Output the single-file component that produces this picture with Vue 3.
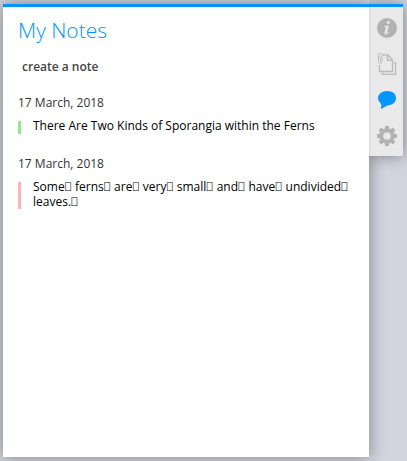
<template>
    <div class="page">
        <div class="panel">
            <div class="notes">
                <h1>My Notes</h1>
                <a class="create">create a note</a>
                <div v-for="(note, index) in notes" :key="index" class="note">
                    <div class="date">{{ note.date }}</div>
                    <div class="text" :class="note.color">
                        <template v-for="(part, i) in note.text.split('⎕')" :key="i"><span v-if="i > 0" class="box">⎕</span>{{ part }}</template>
                    </div>
                </div>
            </div>
        </div>
        <div class="tabs">
            <svg class="icon" viewBox="0 0 20 20">
                <circle cx="10" cy="10" r="10" />
                <circle class="light" cx="11.4" cy="4.5" r="1.5" />
                <path class="light" d="M7.2 8.1 11.9 7.5 10.1 14.2Q9.9 15.2 10.6 14.8L12 13.5 12.5 14Q10.7 16.4 8.8 16.4 7.1 16.3 7.6 14.3L8.9 9.4Q9 8.7 7.1 8.7Z" />
            </svg>
            <svg class="icon outline" viewBox="0 0 20 20">
                <path d="M6.5 2V.8H11L15.5 6.3V17.5H2.5V11M10.5 1.3V6.3H15.5" />
                <path d="M17 9H18.5V20.3H5.5V18.5" />
                <path class="clip" d="M1.5 3V.8Q1.5-.8 3.2-.8T5 .8V7Q5 9.2 3.2 9.2T1.5 7V3.8Q1.5 2.6 2.4 2.6T3.3 3.8V7" />
            </svg>
            <svg class="icon active" viewBox="0 0 20 20">
                <path d="M10.2 1C15.2 1 19 3.8 19 8S15.2 15.3 10.2 15.5Q6.5 17.5 3.8 19 4.9 16.2 4 13.8 1 11.5 1 8C1 3.9 5.2 1 10.2 1Z" />
            </svg>
            <svg class="icon" viewBox="0 0 20 20">
                <circle class="ring" cx="10" cy="10" r="5.8" />
                <rect v-for="n in 8" :key="n" x="8" y="0" width="4" height="4.2" rx=".7" :transform="`rotate(${n * 45} 10 10)`" />
            </svg>
        </div>
    </div>
</template>

<script setup>
const notes = [
    {
        date: '17 March, 2018',
        text: 'There Are Two Kinds of Sporangia within the Ferns',
        color: 'green'
    },
    {
        date: '17 March, 2018',
        text: 'Some⎕ ferns⎕ are⎕ very⎕ small⎕ and⎕ have⎕ undivided⎕ leaves.⎕',
        color: 'pink'
    }
];
</script>

<style>
body {
    background: #d1d4dd;
}
</style>

<style scoped>
.page {
    display: flex;
    align-items: flex-start;
    box-sizing: border-box;
    height: 461px;
    padding: 4px 4px 4px 3px;
    overflow: hidden;
    font-family: "Open Sans", sans-serif;
    font-size: 12px;
}
.panel {
    box-sizing: border-box;
    width: 366px;
    height: 453px;
    border-top: 3px solid #0095ff;
    background: #fff;
    box-shadow: 0 0 15px rgba(0, 0, 0, .4);
}
.notes {
    padding: 7px 15px 0;
}
h1 {
    margin: 0;
    font-size: 21px;
    font-weight: 300;
    line-height: 32px;
    color: #0095ff;
}
.create {
    display: block;
    margin: 12px 0 20px 4px;
    font-weight: 600;
    line-height: 17px;
    color: #444;
}
.note {
    margin-bottom: 23px;
}
.date {
    line-height: 16px;
    margin: 7px 0 11px;
    color: #333;
}
.text {
    position: relative;
    padding-left: 15px;
    line-height: 15px;
    margin-top: -4px;
    color: #000;
}
.text::before {
    content: "";
    position: absolute;
    left: 0;
    top: 3px;
    bottom: -1px;
    width: 3px;
}
.green::before {
    background: #90e890;
}
.pink::before {
    bottom: 0;
    background: #ffb3b9;
}
.box {
    margin-left: .5px;
    font-family: "DejaVu Sans Mono", monospace;
    font-size: 9.5px;
    line-height: 1;
    letter-spacing: 1px;
    vertical-align: 1px;
}
.tabs {
    display: flex;
    flex-direction: column;
    align-items: center;
    gap: 16px;
    box-sizing: border-box;
    position: relative;
    width: 34px;
    height: 152px;
    padding: 11px 0 0 2px;
    border-top: 3px solid #0095ff;
    background: linear-gradient(to right, #d6d6d6, #e9e9e9 2px);
    box-shadow: 0 0 15px rgba(0, 0, 0, .4);
    clip-path: inset(-20px -20px -20px 0);
}
.icon {
    width: 20px;
    height: 20px;
    flex: none;
    overflow: visible;
    fill: #b2b2b2;
}
.light {
    fill: #e9e9e9;
}
.outline {
    fill: none;
    stroke: #b9b9b9;
    stroke-width: 1.3;
}
.clip {
    stroke-width: .9;
}
.active {
    fill: #0095ff;
}
.ring {
    fill: none;
    stroke: #b2b2b2;
    stroke-width: 4;
}
</style>
